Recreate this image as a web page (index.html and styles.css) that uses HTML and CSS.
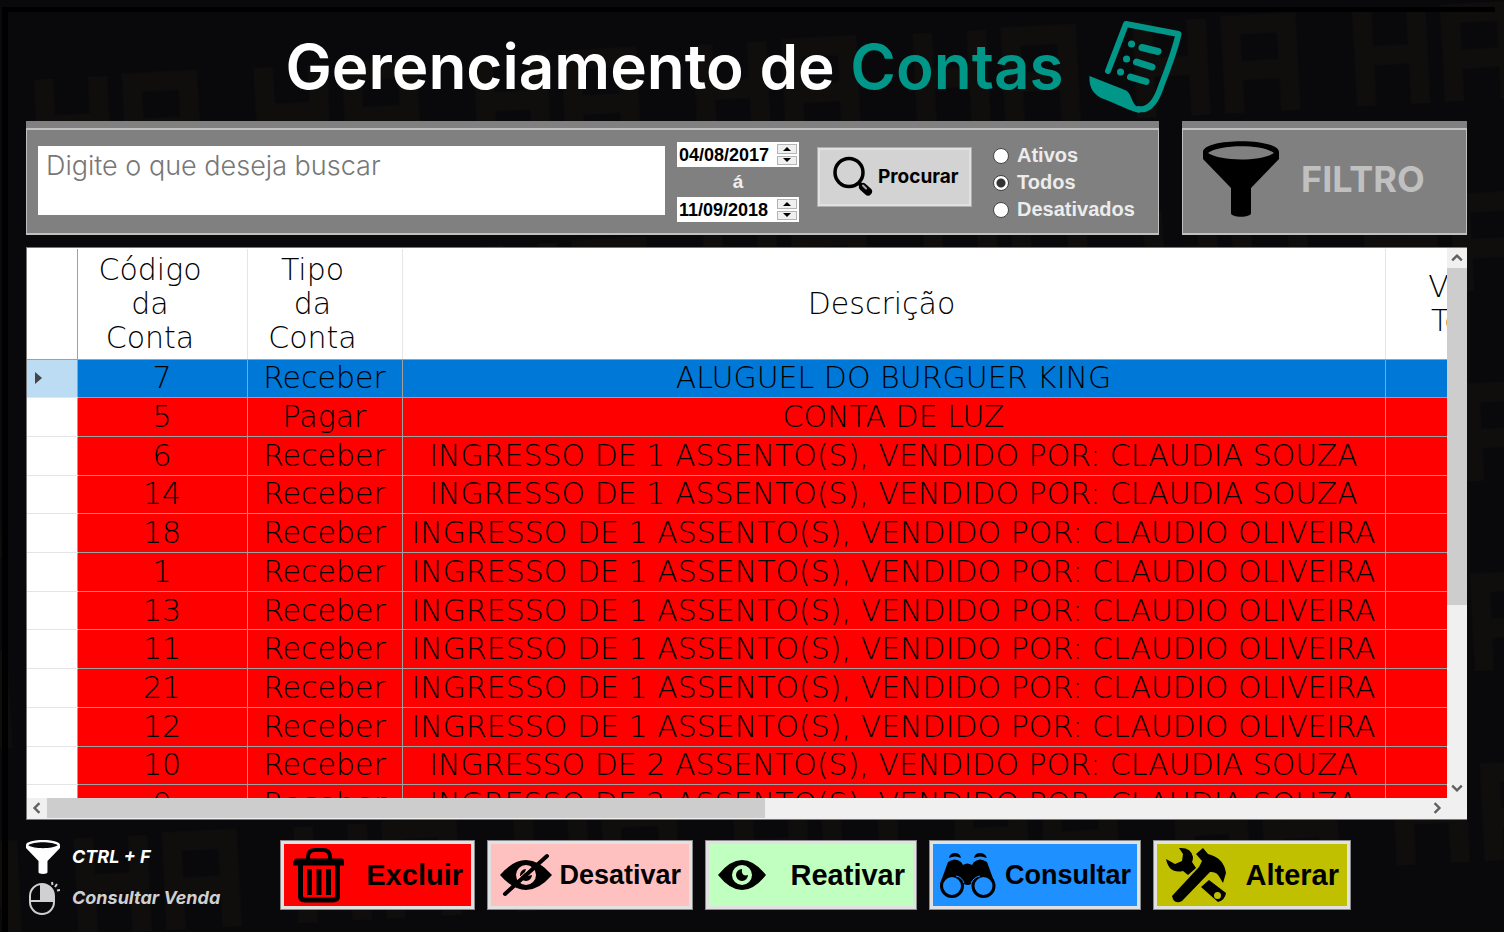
FILE: index.html
```html
<!DOCTYPE html>
<html lang="pt-BR">
<head>
<meta charset="utf-8">
<title>Gerenciamento de Contas</title>
<link rel="stylesheet" href="styles.css">
</head>
<body>
<svg class="backdrop" aria-hidden="true">
  <defs>
    <pattern id="blocks" width="220" height="190" patternUnits="userSpaceOnUse" patternTransform="translate(30 50) rotate(-3)">
      <g fill="none" stroke="#0f0e0d" stroke-width="19">
        <path d="M12 30V126M66 30V126M12 76H66M100 126V38H156V126M100 84H156"/>
      </g>
    </pattern>
  </defs>
  <rect width="100%" height="100%" fill="url(#blocks)"/>
</svg>
<svg class="sprites" aria-hidden="true">
  <symbol id="funnel" viewBox="0 0 76 76">
    <path fill="currentColor" fill-rule="evenodd" d="M0 11C0-3.500 76-3.500 76 11V18L48 47V72C48 77 28 77 28 72V47L0 18ZM5 12C16 3 60 3 71 12C58 20.500 18 20.500 5 12Z"/>
  </symbol>
</svg>
<div class="window">
  <header class="title">
    <h1>Gerenciamento de <span>Contas</span></h1>
    <svg class="title-icon" viewBox="1086 19 96 96" aria-hidden="true">
      <g fill="none" stroke="currentColor" stroke-linecap="round" stroke-linejoin="round">
        <path stroke-width="6" d="M1106 71L1124 24L1176.500 34C1172 55 1163 75 1157 92C1152 104 1145 111 1136 109"/>
        <path stroke-width="7" d="M1129.500 44h.1M1124.500 59h.1M1118.500 72h.1M1140 47.500L1156 51.500M1134.500 62L1150 67M1128.500 77L1144 81.500"/>
      </g>
      <path fill="currentColor" d="M1087.500 76L1123 90C1129 92 1129 101 1134 106L1138 113C1130 112 1113 103 1099 98C1090 93 1087 86 1087.500 76Z"/>
    </svg>
  </header>

  <div class="panels">
    <form class="panel search">
      <div class="panel-body">
        <input class="query" type="text" placeholder="Digite o que deseja buscar" aria-label="Buscar">
        <div class="dates">
          <div class="date">
            <input type="text" value="04/08/2017" aria-label="Data inicial">
            <span class="spin"><button type="button" aria-label="Aumentar data inicial"><svg viewBox="0 0 8 4"><path d="M4 0L8 4H0Z"/></svg></button><button type="button" aria-label="Diminuir data inicial"><svg viewBox="0 0 8 4"><path d="M0 0H8L4 4Z"/></svg></button></span>
          </div>
          <span class="until">á</span>
          <div class="date">
            <input type="text" value="11/09/2018" aria-label="Data final">
            <span class="spin"><button type="button" aria-label="Aumentar data final"><svg viewBox="0 0 8 4"><path d="M4 0L8 4H0Z"/></svg></button><button type="button" aria-label="Diminuir data final"><svg viewBox="0 0 8 4"><path d="M0 0H8L4 4Z"/></svg></button></span>
          </div>
        </div>
        <button class="find" type="button">
          <svg viewBox="832 156 42 42" aria-hidden="true">
            <circle cx="849" cy="172.500" r="14" fill="none" stroke="#000" stroke-width="3.500"/>
            <path d="M858 182L862 186" stroke="#000" stroke-width="4"/>
            <path d="M863 187L868 191.500" stroke="#000" stroke-width="8" stroke-linecap="round"/>
            <path d="M863 185.500L866 188.500" stroke="#aaa" stroke-width="2" stroke-linecap="round"/>
          </svg>
          Procurar
        </button>
        <div class="states">
          <label><input type="radio" name="estado">Ativos</label>
          <label><input type="radio" name="estado" checked>Todos</label>
          <label><input type="radio" name="estado">Desativados</label>
        </div>
      </div>
    </form>
    <section class="panel filter">
      <button class="panel-body" type="button">
        <svg aria-hidden="true"><use href="#funnel"/></svg>
        <span>FILTRO</span>
      </button>
    </section>
  </div>

  <main class="grid">
    <div class="viewport">
      <table>
        <colgroup><col class="c-mark"><col class="c-code"><col class="c-type"><col class="c-desc"><col class="c-total"></colgroup>
        <thead>
          <tr><td></td><th>Código<br>da<br>Conta</th><th>Tipo<br>da<br>Conta</th><th>Descrição</th><th>Valor<br>Total</th></tr>
        </thead>
        <tbody>
          <tr class="selected"><th scope="row" aria-label="Linha atual"><svg viewBox="0 0 7 12"><path d="M0 0L7 6L0 12Z"/></svg></th><td>7</td><td>Receber</td><td>ALUGUEL DO BURGUER KING</td><td></td></tr>
          <tr><th></th><td>5</td><td>Pagar</td><td>CONTA DE LUZ</td><td></td></tr>
          <tr><th></th><td>6</td><td>Receber</td><td>INGRESSO DE 1 ASSENTO(S), VENDIDO POR: CLAUDIA SOUZA</td><td></td></tr>
          <tr><th></th><td>14</td><td>Receber</td><td>INGRESSO DE 1 ASSENTO(S), VENDIDO POR: CLAUDIA SOUZA</td><td></td></tr>
          <tr><th></th><td>18</td><td>Receber</td><td>INGRESSO DE 1 ASSENTO(S), VENDIDO POR: CLAUDIO OLIVEIRA</td><td></td></tr>
          <tr><th></th><td>1</td><td>Receber</td><td>INGRESSO DE 1 ASSENTO(S), VENDIDO POR: CLAUDIO OLIVEIRA</td><td></td></tr>
          <tr><th></th><td>13</td><td>Receber</td><td>INGRESSO DE 1 ASSENTO(S), VENDIDO POR: CLAUDIO OLIVEIRA</td><td></td></tr>
          <tr><th></th><td>11</td><td>Receber</td><td>INGRESSO DE 1 ASSENTO(S), VENDIDO POR: CLAUDIO OLIVEIRA</td><td></td></tr>
          <tr><th></th><td>21</td><td>Receber</td><td>INGRESSO DE 1 ASSENTO(S), VENDIDO POR: CLAUDIO OLIVEIRA</td><td></td></tr>
          <tr><th></th><td>12</td><td>Receber</td><td>INGRESSO DE 1 ASSENTO(S), VENDIDO POR: CLAUDIO OLIVEIRA</td><td></td></tr>
          <tr><th></th><td>10</td><td>Receber</td><td>INGRESSO DE 2 ASSENTO(S), VENDIDO POR: CLAUDIA SOUZA</td><td></td></tr>
          <tr><th></th><td>9</td><td>Receber</td><td>INGRESSO DE 2 ASSENTO(S), VENDIDO POR: CLAUDIA SOUZA</td><td></td></tr>
        </tbody>
      </table>
    </div>
    <div class="bar vertical">
      <button type="button" aria-label="Rolar para cima"><svg viewBox="0 0 10 10"><path d="M1 7L5 3L9 7"/></svg></button>
      <div class="track"><div class="thumb"></div></div>
      <button type="button" aria-label="Rolar para baixo"><svg viewBox="0 0 10 10"><path d="M1 3L5 7L9 3"/></svg></button>
    </div>
    <div class="bar horizontal">
      <button type="button" aria-label="Rolar para a esquerda"><svg viewBox="0 0 10 10"><path d="M7 1L3 5L7 9"/></svg></button>
      <div class="track"><div class="thumb"></div></div>
      <button type="button" aria-label="Rolar para a direita"><svg viewBox="0 0 10 10"><path d="M3 1L7 5L3 9"/></svg></button>
    </div>
    <div class="corner"></div>
  </main>

  <footer class="footer">
    <ul class="hints">
      <li class="bright"><svg aria-hidden="true"><use href="#funnel"/></svg>CTRL + F</li>
      <li><svg viewBox="26 879 34 34" aria-hidden="true">
        <rect x="30" y="882" width="24" height="30" rx="12" fill="none" stroke="currentColor" stroke-width="2"/>
        <path fill="currentColor" d="M41 882C49 881 54 887 54 893V899H41Z"/>
        <path d="M30 899H54M41 882V899M52 880L52.500 883M57 882L55 885M60 888L57 888.500" fill="none" stroke="currentColor" stroke-width="2"/>
      </svg>Consultar Venda</li>
    </ul>
    <div class="actions">
      <button class="remove" type="button">
        <svg viewBox="293 848 54 58" aria-hidden="true"><g fill="none" stroke="#000">
          <path stroke-width="4" d="M309 862V859Q309 852 316 852H324Q331 852 331 859V862"/>
          <path stroke-width="6" stroke-linecap="round" d="M298 863.500H342"/>
          <path stroke-width="4" d="M294 865.500H345"/>
          <path stroke-width="5" stroke-linejoin="round" d="M301.500 866V898Q301.500 902 306 902H334Q338.500 902 338.500 898V866"/>
          <path stroke-width="5" d="M310.500 871V897M320 871V897M329.500 871V897"/>
        </g></svg>
        <span>Excluir</span>
      </button>
      <button class="disable" type="button">
        <svg viewBox="499 853 54 46" aria-hidden="true">
          <path fill-rule="evenodd" d="M500 876Q526 846 552 876Q526 906 500 876ZM526 866A10 10 0 1 0 526 886A10 10 0 1 0 526 866Z"/>
          <path d="M526 870A6 6 0 1 0 532 876L527 877Q524 874 526 870Z"/>
          <path d="M505 895L547 857" stroke="#000" stroke-width="4" stroke-linecap="round"/>
          <path d="M519 879L531 868" stroke="#ffc0c0" stroke-width="1"/>
        </svg>
        <span>Desativar</span>
      </button>
      <button class="enable" type="button">
        <svg viewBox="716 853 50 44" aria-hidden="true">
          <path fill-rule="evenodd" d="M717 875Q741 845 765 875Q741 905 717 875ZM741 865A10 10 0 1 0 741 885A10 10 0 1 0 741 865Z"/>
          <path d="M741 869A6 6 0 1 0 747 875Q740 877 741 869Z"/>
        </svg>
        <span>Reativar</span>
      </button>
      <button class="view" type="button">
        <svg viewBox="939 853 58 48" aria-hidden="true">
          <path d="M949 860Q950 855 955 855Q960 855 961 860Q955 857 949 860ZM974 860Q975 855 980 855Q985 855 987 860Q980 857 974 860Z"/>
          <path d="M940 886L948 864Q955 859 961 864L963 867Q967 864 972 867L974 864Q980 859 987 864L995 886L985 878Q975 877 971 886Q968 888 964 886Q960 877 950 878Z"/>
          <g fill="#1e90ff" stroke="#000" stroke-width="3"><circle cx="952" cy="888" r="10.500"/><circle cx="983.500" cy="888" r="10.500"/></g>
          <path d="M956 878Q962 879 964 885M980 878Q974 879 971 885" fill="none" stroke="#1e90ff" stroke-width="1"/>
        </svg>
        <span>Consultar</span>
      </button>
      <button class="edit" type="button">
        <svg viewBox="1169 847 62 58" aria-hidden="true">
          <path d="M1183 849Q1195 848 1197 858Q1197 861 1196 863L1200 869L1192 876L1187 872Q1173 875 1170 860L1179 865L1186 862L1187 855Z"/>
          <path d="M1200 855L1207 849L1212 855Q1228 859 1230 874L1227 884L1224 879Q1221 872 1214 873L1186 902Q1178 906 1176 897L1203 868L1206 862Z"/>
          <path fill-rule="evenodd" d="M1205 888L1213 881L1230 894Q1229 901 1222 903ZM1221.500 893A3.500 3.500 0 1 0 1221.500 900A3.500 3.500 0 1 0 1221.500 893Z"/>
        </svg>
        <span>Alterar</span>
      </button>
    </div>
  </footer>
</div>
</body>
</html>
```
FILE: styles.css
```css
* { box-sizing: border-box; }
html, body { height: 100%; }
body {
  margin: 0;
  background: #09090c;
  font-family: "Liberation Sans", Arial, sans-serif;
  overflow: hidden;
}
button { font: inherit; cursor: pointer; }
svg { display: block; flex: none; }

.backdrop { position: absolute; inset: 0; width: 100%; height: 100%; z-index: -1; }
.sprites { position: absolute; width: 0; height: 0; }

.window {
  display: flex;
  flex-direction: column;
  height: calc(100vh - 7px);
  margin: 7px 9px 0 2px;
  padding: 0 28px 22px 18px;
  border: solid #000;
  border-width: 5px 0 0 6px;
}

.title {
  display: flex;
  justify-content: center;
  align-items: center;
  gap: 24px;
  height: 109px;
  padding-right: 24px;
}
.title h1 {
  margin: 0;
  color: #fff;
  font: 600 62px/80px Inter, sans-serif;
}
.title h1 span, .title-icon { color: #009688; }
.title-icon { width: 96px; height: 96px; }

.panels { display: flex; gap: 23px; height: 114px; }
.panel { display: flex; padding-top: 7px; background: #808080; }
.panel-body {
  display: flex;
  flex: 1;
  align-items: center;
  border: 2px solid #c0c0c0;
  border-right-width: 1px;
  border-left-width: 1px;
}
.search { flex: 1; }
.search .panel-body { align-items: flex-start; padding: 12px 23px 0 11px; }
.filter { width: 285px; }
.filter .panel-body {
  gap: 22px;
  padding: 0 0 6px 20px;
  background: #808080;
  color: #000;
}
.filter svg { width: 76px; height: 76px; }
.filter span { color: #c0c0c0; font: 700 36px/40px Inter, sans-serif; }

.query {
  flex: 1;
  min-width: 0;
  height: 69px;
  margin-top: 4px;
  padding: 0 8px 30px;
  border: 0;
  background: #fff;
  font: 300 27px/36px Inter, sans-serif;
}
.query::placeholder { color: #777; opacity: 1; }

.dates {
  display: flex;
  flex-direction: column;
  align-items: center;
  width: 122px;
  margin-left: 12px;
}
.date {
  display: flex;
  width: 100%;
  height: 25px;
  padding: 1px 2px;
  background: #fff;
}
.date input {
  flex: 1;
  min-width: 0;
  padding: 0;
  border: 0;
  background: none;
  font: 700 18px/22px "Liberation Sans", Arial, sans-serif;
}
.spin { display: flex; flex-direction: column; gap: 2px; width: 20px; padding: 1px 0; }
.spin button {
  display: flex;
  flex: 1;
  align-items: center;
  justify-content: center;
  padding: 0;
  border: 1px solid #b4b4b4;
  background: #f0f0f0;
}
.spin svg { width: 8px; height: 4px; }
.until { color: #f0f0f0; font-size: 19px; font-weight: 700; line-height: 30px; }

.find {
  display: flex;
  align-items: center;
  gap: 4px;
  width: 155px;
  height: 60px;
  margin-top: 5px;
  margin-left: 18px;
  padding: 0 0 0 12px;
  border: 3px solid #e1e1e1;
  outline: 1px solid #adadad;
  outline-offset: -1px;
  background: #d3d3d3;
  color: #000;
  font: 700 19px/24px Inter, sans-serif;
}
.find svg { width: 42px; height: 42px; }

.states { display: flex; flex-direction: column; width: 142px; margin-left: 21px; }
.states label {
  display: flex;
  align-items: center;
  gap: 8px;
  color: #ececec;
  font-size: 20px;
  font-weight: 700;
  line-height: 27px;
}
.states input {
  appearance: none;
  flex: none;
  width: 16px;
  height: 16px;
  margin: 0;
  border: 1px solid #444;
  border-radius: 50%;
  background: #fff;
}
.states input:checked { background: radial-gradient(circle, #333 0 4px, #fff 5px); }

.grid {
  display: grid;
  grid-template: minmax(0, 1fr) 21px / minmax(0, 1fr) 20px;
  flex: 1;
  min-height: 0;
  margin-top: 12px;
  background: #f0f0f0;
  border: solid #777;
  border-width: 1px 0 1px 1px;
}
.viewport { overflow: hidden; padding-top: 1px; background: #fff; }
table {
  width: 1544px;
  height: 575px;
  table-layout: fixed;
  border-collapse: collapse;
  color: #000;
  font: 200 30px/34px "DejaVu Sans", sans-serif;
}
.c-mark { width: 50px; }
.c-code { width: 170px; }
.c-type { width: 155px; }
.c-desc { width: 983px; }
.c-total { width: 186px; }
th, td { padding: 0; font-weight: inherit; text-align: center; white-space: nowrap; }
thead tr { height: 110px; }
thead th, thead td { border-right: 1px solid #e5e5e5; border-bottom: 1px solid #a0a0a0; }
thead th { padding-right: 24px; }
thead td { border-right-color: #a0a0a0; }
tbody td { background: #f00; border: 1px solid #a0a0a0; }
tbody th { border-bottom: 1px solid #e5e5e5; }
tbody th svg { width: 7px; height: 12px; margin-left: 8px; fill: #444; }
.selected td { background: #0078d7; }
.selected th { background: #bcdcf4; }

.bar { display: flex; }
.bar button {
  display: flex;
  align-items: center;
  justify-content: center;
  flex: none;
  width: 20px;
  height: 20px;
  padding: 0;
  border: 0;
  background: none;
}
.bar svg { width: 12px; height: 12px; fill: none; stroke: #606060; stroke-width: 2; }
.vertical { flex-direction: column; }
.track { flex: 1; }
.thumb { background: #cdcdcd; }
.vertical .thumb { height: 66%; }
.horizontal .thumb { width: 52%; height: 20px; }

.footer { display: flex; margin-top: 20px; height: 70px; }
.hints {
  display: flex;
  flex-direction: column;
  gap: 7px;
  width: 254px;
  margin: 0;
  padding: 0;
  list-style: none;
  color: #d0d0d0;
  font: italic 700 18px/24px Inter, sans-serif;
}
.hints li { display: flex; flex: none; align-items: center; gap: 12px; height: 34px; }
.hints svg { width: 34px; height: 34px; }
.hints .bright { color: #fff; }

.actions { display: flex; gap: 12px; }
.actions button {
  display: flex;
  align-items: center;
  justify-content: space-between;
  padding: 0 8px;
  border: 4px solid #e1e1e1;
  outline: 1px solid #8a8a8a;
  outline-offset: -1px;
  color: #000;
  font-size: 29px;
  font-weight: 700;
}
.actions .remove { width: 195px; background: #f00; }
.actions .remove svg { width: 54px; height: 58px; }
.actions .disable { width: 206px; background: #ffc0c0; font-size: 27px; }
.actions .disable svg { width: 54px; height: 46px; }
.actions .enable { width: 212px; background: #c0ffc0; }
.actions .enable svg { width: 50px; height: 44px; }
.actions .view { width: 212px; padding: 0 6px; background: #1e90ff; font-size: 27px; }
.actions .view svg { width: 58px; height: 48px; }
.actions .edit { width: 198px; background: #c0c000; }
.actions .edit svg { width: 62px; height: 58px; }
```
